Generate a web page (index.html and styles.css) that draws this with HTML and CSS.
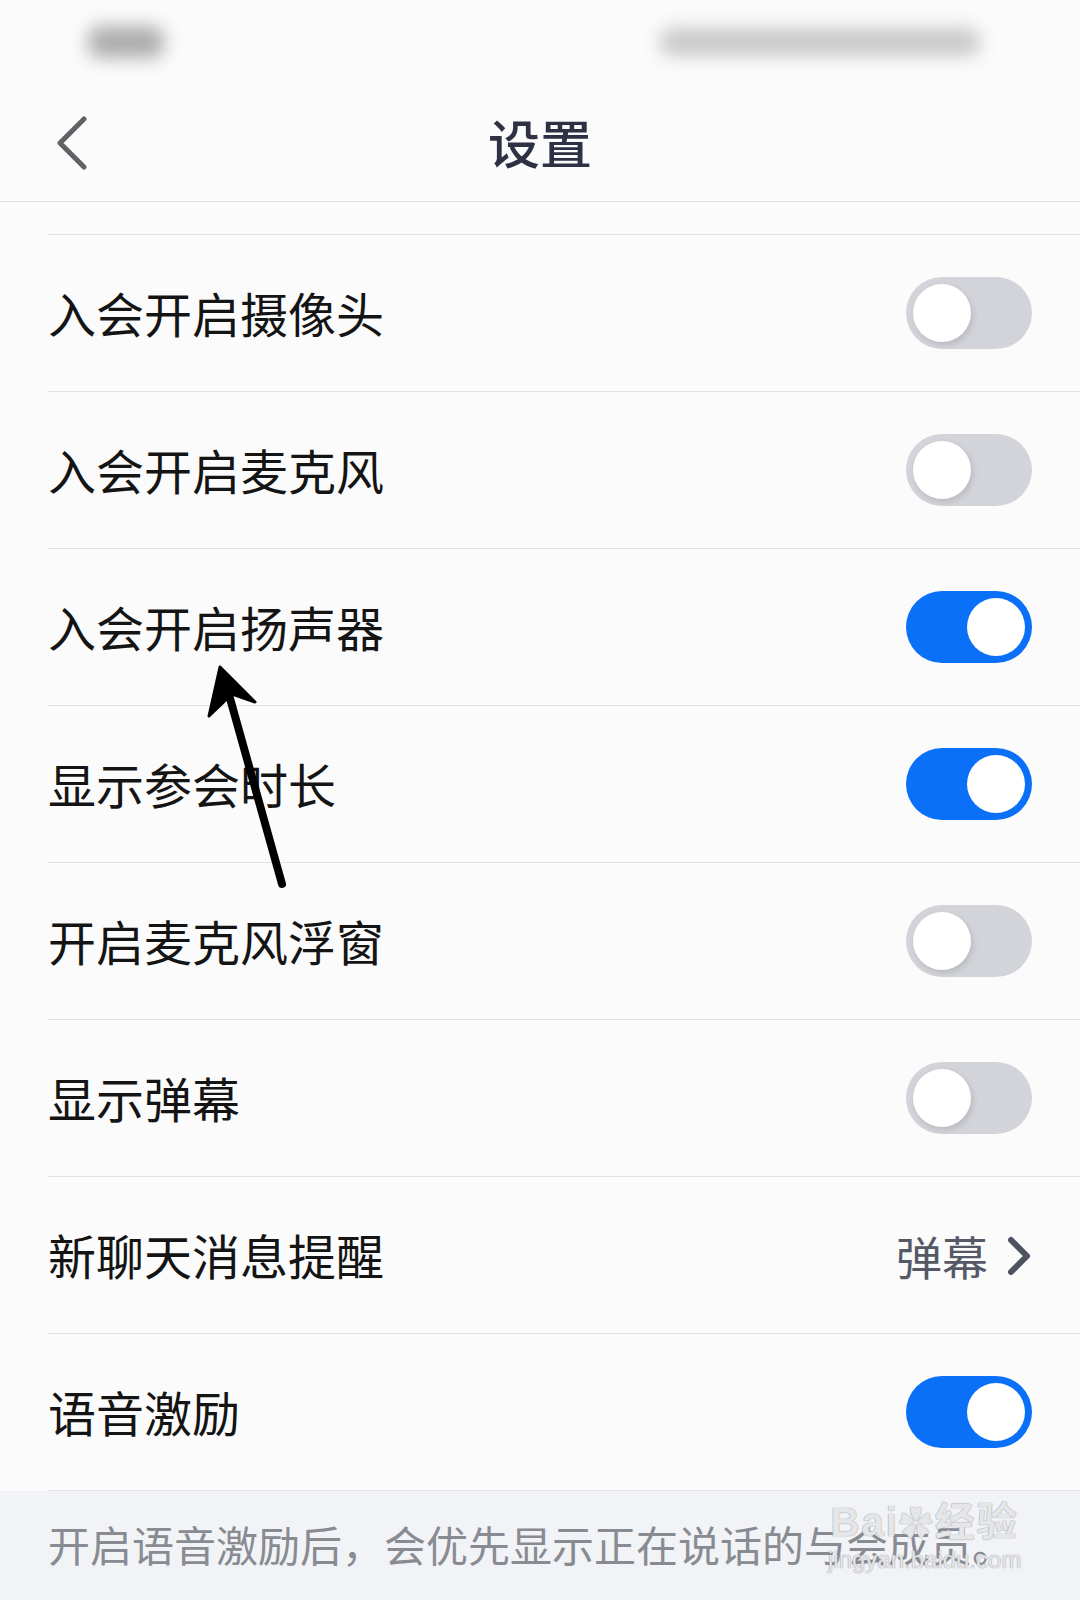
FILE: index.html
```html
<!DOCTYPE html>
<html lang="zh-CN">
<head>
    <meta charset="UTF-8">
    <meta name="viewport" content="width=device-width, initial-scale=1.0">
    <title>设置</title>
    <link rel="stylesheet" href="styles.css">
</head>
<body>
    <div class="status-bar">
        <span class="blur blur-time"></span>
        <span class="blur blur-icons"></span>
    </div>

    <header class="nav">
        <svg class="back" width="34" height="54" viewBox="0 0 34 54">
            <path d="M29 3 L5 27 L29 51" fill="none" stroke="#5f6166" stroke-width="5" stroke-linecap="round" stroke-linejoin="round"/>
        </svg>
        <h1 class="title">设置</h1>
    </header>

    <div class="spacer"></div>

    <ul class="settings">
        <li class="row row-first">
            <span class="label">入会开启摄像头</span>
            <span class="switch"></span>
        </li>
        <li class="row">
            <span class="label">入会开启麦克风</span>
            <span class="switch"></span>
        </li>
        <li class="row">
            <span class="label">入会开启扬声器</span>
            <span class="switch on"></span>
        </li>
        <li class="row">
            <span class="label">显示参会时长</span>
            <span class="switch on"></span>
        </li>
        <li class="row">
            <span class="label">开启麦克风浮窗</span>
            <span class="switch"></span>
        </li>
        <li class="row">
            <span class="label">显示弹幕</span>
            <span class="switch"></span>
        </li>
        <li class="row">
            <span class="label">新聊天消息提醒</span>
            <span class="value">弹幕
                <svg class="chevron" width="26" height="40" viewBox="0 0 26 40">
                    <path d="M5 4 L21 20 L5 36" fill="none" stroke="#4d5260" stroke-width="6" stroke-linecap="round" stroke-linejoin="round"/>
                </svg>
            </span>
        </li>
        <li class="row">
            <span class="label">语音激励</span>
            <span class="switch on"></span>
        </li>
    </ul>

    <p class="note">开启语音激励后，会优先显示正在说话的与会成员。</p>

    <div class="watermark">
        <span class="wm-brand">Bai<span class="wm-paw">&#10047;</span>经验</span>
        <span class="wm-url">jingyan.baidu.com</span>
    </div>

    <!-- annotation arrow drawn on top of the screenshot -->
    <svg class="annotation" width="1080" height="1600" viewBox="0 0 1080 1600">
        <line x1="282" y1="884" x2="226" y2="684" stroke="#000" stroke-width="8" stroke-linecap="round"/>
        <path d="M220 667 L255 702 L232 694 L209 716 Z" fill="#000" stroke="#000" stroke-width="3" stroke-linejoin="round"/>
    </svg>
</body>
</html>
```

FILE: styles.css
```css
body {
    margin: 0;
    background: #fbfbfc;
    font-family: "Noto Sans CJK SC", "Noto Sans", sans-serif;
    color: #141414;
    position: relative;
    height: 1600px;
    overflow: hidden;
}

.status-bar {
    height: 84px;
    position: relative;
}

.blur {
    position: absolute;
    background: #8c8c8c;
    filter: blur(9px);
    border-radius: 12px;
}
.blur-time {
    left: 88px;
    top: 26px;
    width: 76px;
    height: 32px;
    opacity: .7;
}
.blur-icons {
    left: 660px;
    top: 28px;
    width: 320px;
    height: 28px;
    opacity: .45;
}

.nav {
    height: 117px;
    border-bottom: 1px solid #e2e3e6;
    display: flex;
    align-items: center;
    justify-content: center;
    position: relative;
}

.back {
    position: absolute;
    left: 55px;
    top: 32px;
}

.title {
    margin: 0;
    font-size: 52px;
    font-weight: 500;
    color: #2e3044;
    line-height: 1;
    padding-bottom: 2px;
}

.spacer {
    height: 32px;
}

.settings {
    list-style: none;
    margin: 0;
    padding: 0;
}

.row {
    margin-left: 48px;
    padding-right: 48px;
    height: 156px;
    border-bottom: 1px solid #e1e2e5;
    display: flex;
    align-items: center;
    justify-content: space-between;
}
.row-first {
    border-top: 1px solid #e1e2e5;
}

.label {
    font-size: 48px;
    line-height: 1;
    padding-bottom: 2px;
}

.value {
    display: flex;
    align-items: center;
    gap: 18px;
    font-size: 46px;
    color: #555966;
}
.chevron {
    margin-top: 2px;
}

.switch {
    width: 126px;
    height: 72px;
    border-radius: 36px;
    background: #d2d4d9;
    position: relative;
    flex-shrink: 0;
}
.switch::after {
    content: "";
    position: absolute;
    top: 7px;
    left: 7px;
    width: 58px;
    height: 58px;
    border-radius: 50%;
    background: #fff;
    box-shadow: 2px 3px 6px rgba(0, 0, 0, .12);
}
.switch.on {
    background: #0a70f7;
}
.switch.on::after {
    left: 61px;
    box-shadow: none;
}

.note {
    margin: 0;
    background: #f2f3f6;
    height: 109px;
    box-sizing: border-box;
    padding: 22px 48px 0;
    font-size: 42px;
    color: #898b93;
    white-space: nowrap;
}

.watermark {
    position: absolute;
    left: 828px;
    top: 1490px;
    display: flex;
    flex-direction: column;
    align-items: center;
    color: rgba(255, 255, 255, .75);
    text-shadow: 0 0 1px #9a9ca3, 0 0 1px #9a9ca3;
    font-family: "Liberation Sans", "Noto Sans CJK SC", sans-serif;
    pointer-events: none;
}
.wm-brand {
    font-size: 40px;
    font-weight: bold;
    letter-spacing: 2px;
}
.wm-paw {
    font-size: 34px;
}
.wm-url {
    font-size: 24px;
    margin-top: -2px;
}

.annotation {
    position: absolute;
    left: 0;
    top: 0;
    pointer-events: none;
}
```
